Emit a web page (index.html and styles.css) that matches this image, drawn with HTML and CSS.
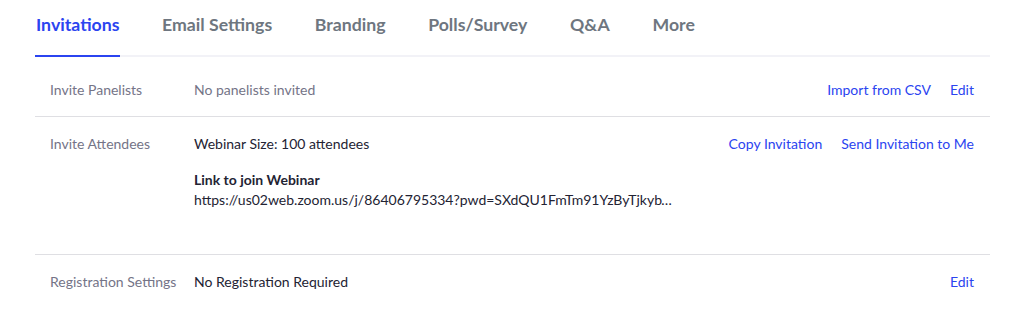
FILE: index.html
```html
<!DOCTYPE html>
<html lang="en">
<head>
    <meta charset="UTF-8">
    <meta name="viewport" content="width=device-width, initial-scale=1.0">
    <title>Webinar Invitations</title>
    <link rel="stylesheet" href="styles.css">
</head>
<body>
    <div class="container">
        <nav class="tabs">
            <a class="tab active">Invitations</a>
            <a class="tab">Email Settings</a>
            <a class="tab">Branding</a>
            <a class="tab">Polls/Survey</a>
            <a class="tab">Q&amp;A</a>
            <a class="tab">More</a>
        </nav>

        <div class="row first">
            <div class="label">Invite Panelists</div>
            <div class="value muted">No panelists invited</div>
            <div class="actions">
                <a class="link">Import from CSV</a>
                <a class="link">Edit</a>
            </div>
        </div>

        <div class="row">
            <div class="label">Invite Attendees</div>
            <div class="value">
                <div>Webinar Size: 100 attendees</div>
                <div class="join-title">Link to join Webinar</div>
                <div class="join-url">https://us02web.zoom.us/j/86406795334?pwd=SXdQU1FmTm91YzByTjkybWZrTzRqUT09</div>
            </div>
            <div class="actions">
                <a class="link">Copy Invitation</a>
                <a class="link">Send Invitation to Me</a>
            </div>
        </div>

        <div class="row last">
            <div class="label">Registration Settings</div>
            <div class="value">No Registration Required</div>
            <div class="actions">
                <a class="link">Edit</a>
            </div>
        </div>
    </div>
</body>
</html>
```

FILE: styles.css
```css
* {
    margin: 0;
    padding: 0;
    box-sizing: border-box;
}

body {
    font-family: Lato, 'Noto Sans', sans-serif;
    background: #fff;
    color: #232333;
    font-size: 14px;
}

.container {
    width: 955px;
    margin-left: 35px;
}

.tabs {
    display: flex;
    gap: 40.6px;
    border-bottom: 2px solid #f2f2f7;
}

.tab {
    font-size: 17.7px;
    font-weight: bold;
    color: #6e7680;
    padding: 14px 1px 19px;
    margin-bottom: -2px;
    border-bottom: 2px solid transparent;
    line-height: 22px;
}

.tab.active {
    color: #2b44f0;
    border-bottom-color: #2b44f0;
}

.row {
    display: flex;
    align-items: flex-start;
    padding: 17px 16px 16px 15px;
    border-bottom: 1px solid #dfdfe3;
    line-height: 20px;
}

.row.first {
    padding-top: 23px;
}

.row.last {
    border-bottom: none;
}

.label {
    width: 144px;
    flex-shrink: 0;
    color: #747487;
}

.value {
    flex: 1;
    min-width: 0;
}

.value.muted {
    color: #747487;
}

.join-title {
    font-weight: bold;
    margin-top: 16px;
}

.join-url {
    width: 480px;
    margin-bottom: 28px;
    white-space: nowrap;
    overflow: hidden;
    text-overflow: ellipsis;
}

.actions {
    display: flex;
    gap: 19px;
}

.link {
    color: #2b44f0;
    cursor: pointer;
}
```
